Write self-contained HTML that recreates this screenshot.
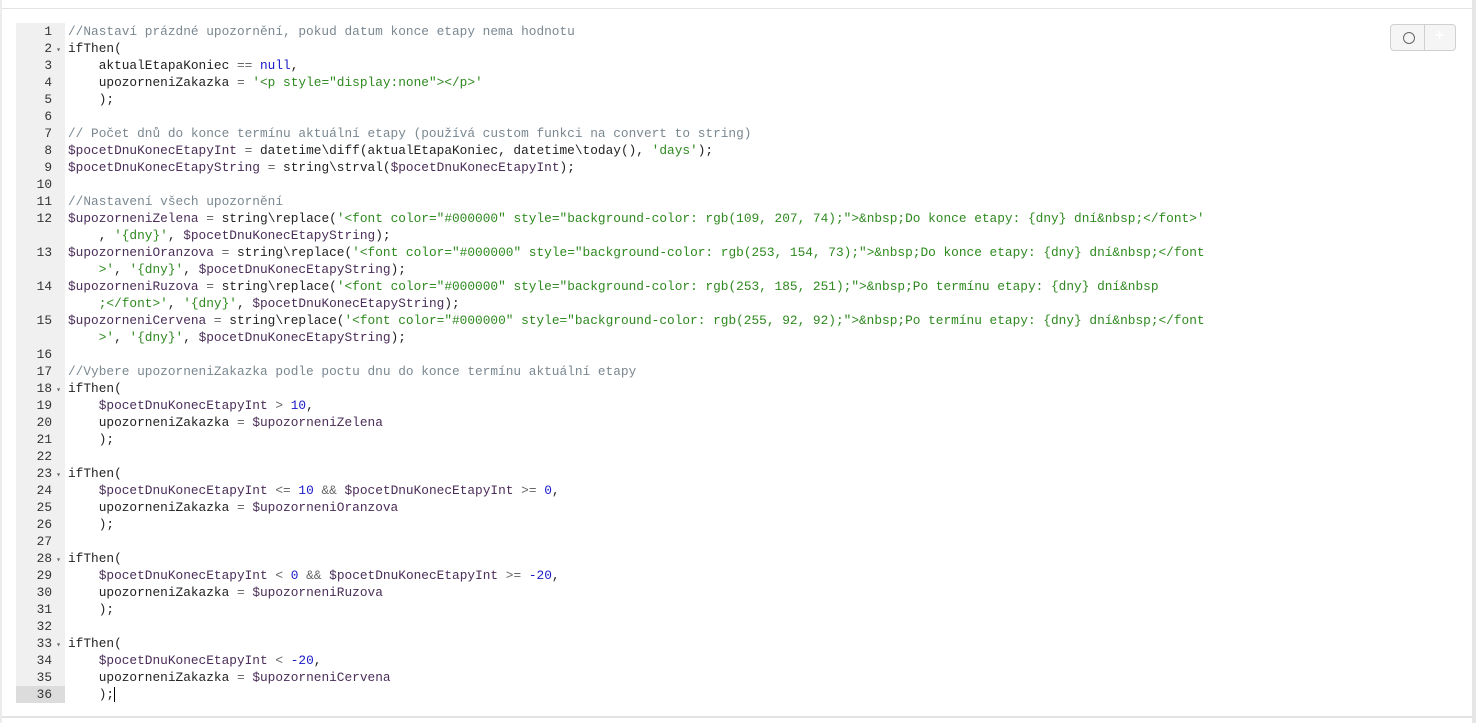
<!DOCTYPE html>
<html><head><meta charset="utf-8"><style>
body{margin:0;background:#fff;width:1476px;height:723px;overflow:hidden;font-family:"Liberation Mono",monospace;}
.topl{position:absolute;left:0;top:8px;width:1476px;height:1px;background:#e3e3e3}
.botl{position:absolute;left:0;top:716px;width:1476px;height:2px;background:#e3e3e3}
.lb{position:absolute;left:0;top:0;width:2px;height:723px;background:#ececec}
.rb{position:absolute;right:0;top:0;width:4px;height:723px;background:#e6e6e6}
.ed{position:absolute;left:16px;top:23px}
.row{height:17px;line-height:17px;font-size:12.8px;white-space:pre;position:relative;color:#222}
.g{display:inline-block;width:49px;background:#f0f0f0;color:#333;text-align:right;padding-right:0;box-sizing:border-box;vertical-align:top}
.g span{display:inline-block;width:36px;text-align:right}
.g i{font-style:normal;display:inline-block;width:13px;font-size:8px;color:#666;text-align:center}
.act .g{background:#dcdcdc}
.c{display:inline-block;padding-left:3px}
.cm{color:#7a8891}.s{color:#2e8a1f}.n{color:#1a1ac8}.o{color:#666}.v{color:#4a2d58}
.btn{position:absolute;left:1390px;top:24px;width:66px;height:27px;border:1px solid #d0d0d0;border-radius:4px;background:#f5f5f5;box-sizing:border-box}
.btn .d{position:absolute;left:33px;top:0;width:1px;height:25px;background:#cfcfcf}
.btn .cir{position:absolute;left:12px;top:7px;width:10px;height:10px;border:1.3px solid #666;border-radius:50%}
.btn .pl{position:absolute;left:44px;top:2px;color:#fff;font:bold 16px "Liberation Sans",sans-serif}
.cur{display:inline-block;width:1px;height:15px;background:#000;vertical-align:middle}
</style></head><body>
<div class="topl"></div><div class="botl"></div><div class="lb"></div><div class="rb"></div>
<div class="btn"><div class="cir"></div><div class="d"></div><div class="pl">+</div></div>
<div class="ed">
<div class="row"><span class="g"><span>1</span><i></i></span><span class="c cm">//Nastaví prázdné upozornění, pokud datum konce etapy nema hodnotu</span></div>
<div class="row"><span class="g"><span>2</span><i>▾</i></span><span class="c">ifThen(</span></div>
<div class="row"><span class="g"><span>3</span><i></i></span><span class="c">    aktualEtapaKoniec <span class="o">==</span> <span class="n">null</span>,</span></div>
<div class="row"><span class="g"><span>4</span><i></i></span><span class="c">    upozorneniZakazka <span class="o">=</span> <span class="s">'&lt;p style="display:none"&gt;&lt;/p&gt;'</span></span></div>
<div class="row"><span class="g"><span>5</span><i></i></span><span class="c">    );</span></div>
<div class="row"><span class="g"><span>6</span><i></i></span><span class="c"></span></div>
<div class="row"><span class="g"><span>7</span><i></i></span><span class="c cm">// Počet dnů do konce termínu aktuální etapy (používá custom funkci na convert to string)</span></div>
<div class="row"><span class="g"><span>8</span><i></i></span><span class="c"><span class="v">$pocetDnuKonecEtapyInt</span> <span class="o">=</span> datetime\diff(aktualEtapaKoniec, datetime\today(), <span class="s">'days'</span>);</span></div>
<div class="row"><span class="g"><span>9</span><i></i></span><span class="c"><span class="v">$pocetDnuKonecEtapyString</span> <span class="o">=</span> string\strval(<span class="v">$pocetDnuKonecEtapyInt</span>);</span></div>
<div class="row"><span class="g"><span>10</span><i></i></span><span class="c"></span></div>
<div class="row"><span class="g"><span>11</span><i></i></span><span class="c cm">//Nastavení všech upozornění</span></div>
<div class="row"><span class="g"><span>12</span><i></i></span><span class="c"><span class="v">$upozorneniZelena</span> <span class="o">=</span> string\replace(<span class="s">'&lt;font color="#000000" style="background-color: rgb(109, 207, 74);"&gt;&amp;nbsp;Do konce etapy: {dny} dní&amp;nbsp;&lt;/font&gt;'</span></span></div>
<div class="row"><span class="g"><span></span><i></i></span><span class="c">    , <span class="s">'{dny}'</span>, <span class="v">$pocetDnuKonecEtapyString</span>);</span></div>
<div class="row"><span class="g"><span>13</span><i></i></span><span class="c"><span class="v">$upozorneniOranzova</span> <span class="o">=</span> string\replace(<span class="s">'&lt;font color="#000000" style="background-color: rgb(253, 154, 73);"&gt;&amp;nbsp;Do konce etapy: {dny} dní&amp;nbsp;&lt;/font</span></span></div>
<div class="row"><span class="g"><span></span><i></i></span><span class="c"><span class="s">    &gt;'</span>, <span class="s">'{dny}'</span>, <span class="v">$pocetDnuKonecEtapyString</span>);</span></div>
<div class="row"><span class="g"><span>14</span><i></i></span><span class="c"><span class="v">$upozorneniRuzova</span> <span class="o">=</span> string\replace(<span class="s">'&lt;font color="#000000" style="background-color: rgb(253, 185, 251);"&gt;&amp;nbsp;Po termínu etapy: {dny} dní&amp;nbsp</span></span></div>
<div class="row"><span class="g"><span></span><i></i></span><span class="c"><span class="s">    ;&lt;/font&gt;'</span>, <span class="s">'{dny}'</span>, <span class="v">$pocetDnuKonecEtapyString</span>);</span></div>
<div class="row"><span class="g"><span>15</span><i></i></span><span class="c"><span class="v">$upozorneniCervena</span> <span class="o">=</span> string\replace(<span class="s">'&lt;font color="#000000" style="background-color: rgb(255, 92, 92);"&gt;&amp;nbsp;Po termínu etapy: {dny} dní&amp;nbsp;&lt;/font</span></span></div>
<div class="row"><span class="g"><span></span><i></i></span><span class="c"><span class="s">    &gt;'</span>, <span class="s">'{dny}'</span>, <span class="v">$pocetDnuKonecEtapyString</span>);</span></div>
<div class="row"><span class="g"><span>16</span><i></i></span><span class="c"></span></div>
<div class="row"><span class="g"><span>17</span><i></i></span><span class="c cm">//Vybere upozorneniZakazka podle poctu dnu do konce termínu aktuální etapy</span></div>
<div class="row"><span class="g"><span>18</span><i>▾</i></span><span class="c">ifThen(</span></div>
<div class="row"><span class="g"><span>19</span><i></i></span><span class="c">    <span class="v">$pocetDnuKonecEtapyInt</span> <span class="o">&gt;</span> <span class="n">10</span>,</span></div>
<div class="row"><span class="g"><span>20</span><i></i></span><span class="c">    upozorneniZakazka <span class="o">=</span> <span class="v">$upozorneniZelena</span></span></div>
<div class="row"><span class="g"><span>21</span><i></i></span><span class="c">    );</span></div>
<div class="row"><span class="g"><span>22</span><i></i></span><span class="c"></span></div>
<div class="row"><span class="g"><span>23</span><i>▾</i></span><span class="c">ifThen(</span></div>
<div class="row"><span class="g"><span>24</span><i></i></span><span class="c">    <span class="v">$pocetDnuKonecEtapyInt</span> <span class="o">&lt;=</span> <span class="n">10</span> <span class="o">&amp;&amp;</span> <span class="v">$pocetDnuKonecEtapyInt</span> <span class="o">&gt;=</span> <span class="n">0</span>,</span></div>
<div class="row"><span class="g"><span>25</span><i></i></span><span class="c">    upozorneniZakazka <span class="o">=</span> <span class="v">$upozorneniOranzova</span></span></div>
<div class="row"><span class="g"><span>26</span><i></i></span><span class="c">    );</span></div>
<div class="row"><span class="g"><span>27</span><i></i></span><span class="c"></span></div>
<div class="row"><span class="g"><span>28</span><i>▾</i></span><span class="c">ifThen(</span></div>
<div class="row"><span class="g"><span>29</span><i></i></span><span class="c">    <span class="v">$pocetDnuKonecEtapyInt</span> <span class="o">&lt;</span> <span class="n">0</span> <span class="o">&amp;&amp;</span> <span class="v">$pocetDnuKonecEtapyInt</span> <span class="o">&gt;=</span> <span class="n">-20</span>,</span></div>
<div class="row"><span class="g"><span>30</span><i></i></span><span class="c">    upozorneniZakazka <span class="o">=</span> <span class="v">$upozorneniRuzova</span></span></div>
<div class="row"><span class="g"><span>31</span><i></i></span><span class="c">    );</span></div>
<div class="row"><span class="g"><span>32</span><i></i></span><span class="c"></span></div>
<div class="row"><span class="g"><span>33</span><i>▾</i></span><span class="c">ifThen(</span></div>
<div class="row"><span class="g"><span>34</span><i></i></span><span class="c">    <span class="v">$pocetDnuKonecEtapyInt</span> <span class="o">&lt;</span> <span class="n">-20</span>,</span></div>
<div class="row"><span class="g"><span>35</span><i></i></span><span class="c">    upozorneniZakazka <span class="o">=</span> <span class="v">$upozorneniCervena</span></span></div>
<div class="row act"><span class="g"><span>36</span><i></i></span><span class="c">    );<span class="cur"></span></span></div>
</div>
</body></html>
